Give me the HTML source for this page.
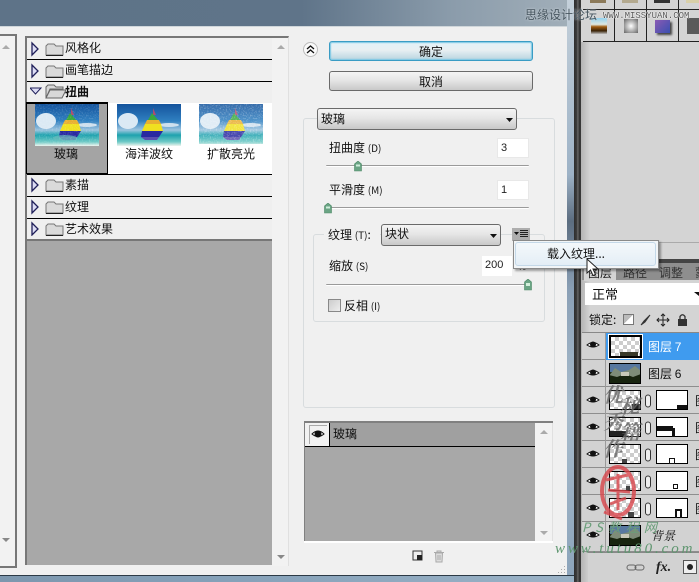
<!DOCTYPE html>
<html><head><meta charset="utf-8">
<style>
*{box-sizing:border-box}
html,body{margin:0;padding:0;width:699px;height:582px;overflow:hidden;background:#d4d4d4}
body{position:relative;font:12px/14px "WenQuanYi Zen Hei","Noto Sans CJK SC","Liberation Sans",sans-serif;color:#111}
.a{position:absolute}
.t{position:absolute;white-space:nowrap;line-height:14px}
.row{position:absolute;left:27px;width:245px;background:#efefef;border-bottom:1px solid #000}
.btn{position:absolute;border:1px solid #6a6a6a;border-radius:3px;background:linear-gradient(#f4f4f4,#e6e6e6 45%,#c8c8c8);text-align:center}
.inp{position:absolute;background:#fff;border:1px solid #e8e8e8;padding:2px 0 0 3px;font-family:"Liberation Sans",sans-serif;font-size:11px;color:#222}
.sl{position:absolute;height:2px;background:#9a9a9a;border-bottom:1px solid #fff;border-radius:1px}
.gb{position:absolute;border:1px solid #d8dcde;border-radius:3px}
.lr{position:absolute;left:582px;width:117px;height:27px;border-bottom:1px solid #8e8e8e;background:#d2d2d2}
.ck{position:absolute;width:32px;height:20px;border:1px solid #000;background-color:#fff;background-image:linear-gradient(45deg,#ccc 25%,transparent 25%,transparent 75%,#ccc 75%),linear-gradient(45deg,#ccc 25%,transparent 25%,transparent 75%,#ccc 75%);background-size:8px 8px;background-position:0 0,4px 4px}
.mk{position:absolute;left:656px;width:32px;height:20px;border:1px solid #000;background:#fff}
</style></head><body>

<!-- title bar -->
<div class="a" style="left:0;top:0;width:580px;height:26px;background:linear-gradient(90deg,#5e7388 0,#5f7489 52%,#8b9cab 78%,#a3b0ba 100%)"></div>
<div class="a" style="left:0;top:26px;width:568px;height:1px;background:#cfd6da"></div>
<!-- dialog -->
<div class="a" style="left:0;top:27px;width:568px;height:548px;background:#f0f0f0"></div>
<div class="a" style="left:567px;top:0;width:7px;height:582px;background:linear-gradient(#c4d0da,#9db2c6 30%,#5c6d80 38%,#8ba0b6 50%,#a8bccc 70%,#8ba3ba)"></div>
<div class="a" style="left:0;top:575px;width:574px;height:1px;background:#2c3a46"></div>
<div class="a" style="left:0;top:576px;width:574px;height:6px;background:linear-gradient(90deg,#7d97ae,#84a0b8 35%,#9ab2c6)"></div>
<div class="a" style="left:574px;top:0;width:7px;height:582px;background:linear-gradient(90deg,#2e2e2e,#3d3d3d 40%,#6a6a6a 55%,#333 75%,#3a3a3a)"></div>

<!-- left scroll -->
<div class="a" style="left:0;top:34px;width:17px;height:534px;background:#f2f2f2;border-right:2px solid #777;border-top:2px solid #777;border-bottom:2px solid #777"></div>
<svg class="a" style="left:1px;top:44px" width="10" height="6"><path d="M1 5L5 1L9 5Z" fill="#aaa"/></svg>
<svg class="a" style="left:1px;top:537px" width="10" height="6"><path d="M1 1L5 5L9 1Z" fill="#888"/></svg>

<!-- category list -->
<div class="a" style="left:25px;top:36px;width:247px;height:529px;background:#a8a8a8;border:1px solid #777;border-width:2px 0 0 2px"></div>
<div class="a" style="left:272px;top:36px;width:17px;height:530px;background:#f2f2f2;border-top:2px solid #777;border-right:1px solid #e0e0e0"></div>
<svg class="a" style="left:276px;top:44px" width="10" height="6"><path d="M1 5L5 1L9 5Z" fill="#aaa"/></svg>
<svg class="a" style="left:276px;top:554px" width="10" height="6"><path d="M1 1L5 5L9 1Z" fill="#888"/></svg>

<div class="row" style="top:38px;height:22px"></div>
<div class="row" style="top:60px;height:22px"></div>
<div class="row" style="top:82px;height:21px;border-bottom:0"></div>
<div class="a" style="left:27px;top:103px;width:245px;height:72px;background:#fff;border-bottom:1px solid #000"></div>
<div class="a" style="left:26px;top:102px;width:82px;height:72px;background:#a4a4a4;border:1px solid #000;border-top-width:2px"></div>
<div class="row" style="top:175px;height:22px"></div>
<div class="row" style="top:197px;height:22px"></div>
<div class="row" style="top:219px;height:22px;border-bottom:2px solid #777"></div>

<svg width="0" height="0" style="position:absolute">
<defs>
<linearGradient id="sky" x1="0" y1="0" x2="0" y2="1"><stop offset="0" stop-color="#14539c"/><stop offset=".4" stop-color="#2f7fc0"/><stop offset=".62" stop-color="#9cc4de"/><stop offset=".74" stop-color="#1ea2ae"/><stop offset=".9" stop-color="#6fcac6"/><stop offset="1" stop-color="#eef4ee"/></linearGradient>
<filter id="nz" x="0" y="0" width="100%" height="100%"><feTurbulence type="fractalNoise" baseFrequency=".7" numOctaves="1" seed="3"/><feColorMatrix values="0 0 0 0 1 0 0 0 0 1 0 0 0 0 1 1.6 0 0 0 -.75"/></filter>
<g id="boat">
<rect width="64" height="42" fill="url(#sky)"/>
<ellipse cx="11" cy="17" rx="10" ry="8" fill="#dbe9f4"/>
<ellipse cx="52" cy="21" rx="10" ry="2" fill="#cfe0ee"/>
<path d="M36 4V11H39Z" fill="#b04a70"/>
<path d="M35 9L31 16H41Z" fill="#3aa83c"/>
<path d="M30 16H42L44 20H28Z" fill="#e8b030"/>
<path d="M28 20H44L46 27H25Z" fill="#f0e020"/>
<path d="M25 27H46L42 33H24Z" fill="#2a2aa0"/>
<path d="M24 33H42L40 36H28Z" fill="#5a50b0"/>
</g>
</defs></svg>
<svg class="a" style="left:35px;top:104px" width="64" height="42"><use href="#boat"/><ellipse cx="30" cy="34" rx="12" ry="3" fill="#6bb" opacity=".7"/><rect width="64" height="42" filter="url(#nz)" opacity=".35"/></svg>
<svg class="a" style="left:117px;top:104px" width="64" height="42"><use href="#boat"/></svg>
<svg class="a" style="left:199px;top:104px" width="64" height="40"><use href="#boat"/><rect width="64" height="40" fill="#fff" opacity=".15"/><rect width="64" height="40" filter="url(#nz)" opacity=".6"/></svg>

<!-- folder + arrows -->
<svg class="a" style="left:30px;top:40px" width="36" height="196" fill="none">
<g id="f"><path d="M2 3L8 9L2 15Z" fill="#dcdcf4" stroke="#20205a" stroke-width="1.300"/><path d="M16 6L18 4H24L26 6H33V15H16Z" fill="#dadada" stroke="#777"/><path d="M16 15.500H33" stroke="#222"/></g>
<use href="#f" y="22"/>
<path d="M0 48H11L5.500 54Z" fill="#dcdcf4" stroke="#20205a"/>
<path d="M16 47L18 45H24L26 47H33V49H20L16 58Z M16 58H32L36 50H20Z" fill="#d8d8d8" stroke="#666"/>
<use href="#f" y="136"/><use href="#f" y="158"/><use href="#f" y="180"/>
</svg>
<div class="t" style="left:65px;top:41px">风格化</div>
<div class="t" style="left:65px;top:63px">画笔描边</div>
<div class="t" style="left:65px;top:85px;font-weight:bold">扭曲</div>
<div class="t" style="left:54px;top:147px">玻璃</div>
<div class="t" style="left:125px;top:147px">海洋波纹</div>
<div class="t" style="left:207px;top:147px">扩散亮光</div>
<div class="t" style="left:65px;top:178px">素描</div>
<div class="t" style="left:65px;top:200px">纹理</div>
<div class="t" style="left:65px;top:222px">艺术效果</div>

<!-- collapse -->
<div class="a" style="left:303px;top:42px;width:15px;height:15px;border-radius:50%;background:#fafafa;border:1px solid #bbb"></div>
<svg class="a" style="left:306px;top:45px" width="9" height="9" fill="none" stroke="#111" stroke-width="1.300"><path d="M1 4L4.500 1L8 4M1 8L4.500 5L8 8"/></svg>

<!-- buttons -->
<div class="btn" style="left:329px;top:41px;width:204px;height:20px;border-color:#3a9cc4;box-shadow:0 0 1px 1px #7cc8e4 inset;background:linear-gradient(#e2f2f8,#e8eff2 45%,#b8d4e0);line-height:19px">确定</div>
<div class="btn" style="left:329px;top:71px;width:204px;height:20px;line-height:19px">取消</div>

<!-- main group -->
<div class="gb" style="left:303px;top:118px;width:252px;height:290px"></div>
<div class="btn" style="left:317px;top:108px;width:200px;height:22px;text-align:left;padding-left:3px;line-height:19px">玻璃</div>
<svg class="a" style="left:505px;top:117px" width="9" height="6"><path d="M1 1H8L4.500 5Z" fill="#111"/></svg>

<div class="t" style="left:329px;top:141px">扭曲度 <span style="font-size:10px">(D)</span></div>
<div class="inp" style="left:497px;top:138px;width:32px;height:20px">3</div>
<div class="sl" style="left:326px;top:165px;width:203px"></div>
<svg class="a" style="left:354px;top:161px" width="8" height="11"><path d="M4 0L7.500 3V10H.5V3Z" fill="#6aa484" stroke="#4e8a68" stroke-width=".6"/><path d="M2 3.500H6V5.500H2Z" fill="#cfeedb"/></svg>

<div class="t" style="left:329px;top:183px">平滑度 <span style="font-size:10px">(M)</span></div>
<div class="inp" style="left:497px;top:180px;width:32px;height:20px">1</div>
<div class="sl" style="left:326px;top:207px;width:203px"></div>
<svg class="a" style="left:324px;top:203px" width="8" height="11"><path d="M4 0L7.500 3V10H.5V3Z" fill="#6aa484" stroke="#4e8a68" stroke-width=".6"/><path d="M2 3.500H6V5.500H2Z" fill="#cfeedb"/></svg>

<!-- texture group -->
<div class="gb" style="left:313px;top:234px;width:232px;height:88px"></div>
<div class="a" style="left:324px;top:226px;width:56px;height:18px;background:#f0f0f0"></div>
<div class="t" style="left:328px;top:228px">纹理 <span style="font-size:10px">(T)</span>:</div>
<div class="btn" style="left:381px;top:224px;width:120px;height:22px;text-align:left;padding-left:3px;line-height:18px">块状</div>
<svg class="a" style="left:489px;top:233px" width="9" height="6"><path d="M1 1H8L4.500 5Z" fill="#111"/></svg>
<div class="a" style="left:512px;top:228px;width:18px;height:13px;background:#aeaeae"></div>
<svg class="a" style="left:513px;top:230px" width="16" height="9"><path d="M1 2H6L3.500 5Z" fill="#111"/><path d="M7 .5H15M7 2.500H15M7 4.500H15M7 6.500H15" stroke="#222"/></svg>

<div class="t" style="left:329px;top:259px">缩放 <span style="font-size:10px">(S)</span></div>
<div class="inp" style="left:482px;top:256px;width:30px;height:20px;border:0">200</div>
<div class="t" style="left:518px;top:262px;font:9px/10px 'Liberation Sans',sans-serif;color:#333">%</div>
<div class="sl" style="left:326px;top:284px;width:203px"></div>
<svg class="a" style="left:524px;top:279px" width="8" height="12"><path d="M4 0L7.500 3V11H.5V3Z" fill="#6aa484" stroke="#4e8a68" stroke-width=".6"/><path d="M2 4H6V7H2Z" fill="#d4f0dc"/></svg>
<div class="a" style="left:328px;top:299px;width:13px;height:13px;border:1px solid #888;background:linear-gradient(135deg,#ccc,#eee)"></div>
<div class="t" style="left:344px;top:299px">反相 <span style="font-size:10px">(I)</span></div>

<!-- effect list -->
<div class="a" style="left:304px;top:421px;width:249px;height:121px;background:#a8a8a8;border:1px solid #808080;border-width:2px 0 1px 1px"></div>
<div class="a" style="left:305px;top:423px;width:230px;height:24px;background:#a0a0a0;border-bottom:1px solid #000"></div>
<div class="a" style="left:305px;top:423px;width:25px;height:23px;background:#f2f2f2;border-right:1px solid #000"></div>
<div class="a" style="left:309px;top:425px;width:18px;height:19px;border:1px solid #aaa;border-width:1px 0 0 1px"></div>
<svg class="a" style="left:311px;top:428px" width="14" height="12"><path d="M1 6Q7 0 13 6Q7 11 1 6Z" fill="#fff" stroke="#111"/><circle cx="7" cy="6" r="3.500" fill="#111"/></svg>
<div class="t" style="left:333px;top:427px">玻璃</div>
<div class="a" style="left:535px;top:423px;width:18px;height:120px;background:#f2f2f2;border-right:1px solid #e0e0e0"></div>
<svg class="a" style="left:539px;top:429px" width="10" height="6"><path d="M1 5L5 1L9 5Z" fill="#aaa"/></svg>
<svg class="a" style="left:539px;top:530px" width="10" height="6"><path d="M1 1L5 5L9 1Z" fill="#aaa"/></svg>
<div class="a" style="left:304px;top:541px;width:249px;height:2px;background:#fff"></div>
<svg class="a" style="left:412px;top:550px" width="12" height="12"><rect x="1" y="1" width="9" height="9" fill="#eee" stroke="#333"/><rect x="5" y="5" width="5" height="5" fill="#222"/></svg>
<svg class="a" style="left:433px;top:550px" width="12" height="13" fill="#ddd" stroke="#aaa"><path d="M1 2.500H11M4 2V1H8V2M2.500 3L3 12H9L9.500 3Z"/><path d="M5 5V10M7 5V10"/></svg>
<svg class="a" style="left:557px;top:566px" width="10" height="8" fill="#aaa"><rect x="7" y="0" width="1" height="1"/><rect x="4" y="3" width="1" height="1"/><rect x="7" y="3" width="1" height="1"/><rect x="1" y="6" width="1" height="1"/><rect x="4" y="6" width="1" height="1"/><rect x="7" y="6" width="1" height="1"/></svg>

<!-- right panel -->
<div class="a" style="left:581px;top:0;width:118px;height:582px;background:#d4d4d4"></div>
<div class="a" style="left:581px;top:42px;width:9px;height:540px;background:linear-gradient(90deg,#b4b4b4,#d4d4d4)"></div>
<div class="a" style="left:583px;top:9px;width:116px;height:1px;background:#222"></div>
<div class="a" style="left:583px;top:41px;width:116px;height:1px;background:#222"></div>
<div class="a" style="left:614px;top:0;width:1px;height:41px;background:#222"></div>
<div class="a" style="left:646px;top:0;width:1px;height:41px;background:#222"></div>
<div class="a" style="left:678px;top:0;width:1px;height:41px;background:#222"></div>
<div class="a" style="left:590px;top:0;width:16px;height:3px;background:#8c7a5a"></div>
<div class="a" style="left:622px;top:0;width:16px;height:3px;background:#b4aa90"></div>
<div class="a" style="left:654px;top:0;width:16px;height:3px;background:#333"></div>
<div class="a" style="left:686px;top:0;width:13px;height:3px;background:#d8cfa8"></div>
<div class="a" style="left:591px;top:18px;width:16px;height:16px;background:linear-gradient(#8fd0ee,#dfe8e0 40%,#a05c10 55%,#3a2408 80%,#bbb)"></div>
<div class="a" style="left:624px;top:19px;width:14px;height:14px;background:radial-gradient(#fff,#666)"></div>
<div class="a" style="left:655px;top:20px;width:15px;height:13px;background:linear-gradient(135deg,#8a5ab4,#3a50b0);box-shadow:2px 2px 2px #444"></div>
<div class="a" style="left:687px;top:18px;width:12px;height:16px;background:#5a5a5a"></div>

<div class="a" style="left:581px;top:242px;width:118px;height:1px;background:#aaa"></div>
<div class="a" style="left:581px;top:259px;width:118px;height:4px;background:#444"></div>
<div class="a" style="left:582px;top:263px;width:117px;height:17px;background:#8e8e8e"></div>
<div class="a" style="left:584px;top:263px;width:32px;height:18px;background:#d4d4d4"></div>
<div class="t" style="left:588px;top:266px;color:#222">图层</div>
<div class="t" style="left:623px;top:266px;color:#333">路径</div>
<div class="t" style="left:659px;top:266px;color:#333">调整</div>
<div class="t" style="left:695px;top:266px;color:#333">蒙</div>
<div class="a" style="left:585px;top:283px;width:114px;height:22px;background:#fff"></div>
<div class="t" style="left:592px;top:287px;font-size:13px">正常</div>
<svg class="a" style="left:694px;top:292px" width="5" height="5"><path d="M0 0H5V4Z" fill="#111"/></svg>
<div class="t" style="left:589px;top:313px">锁定:</div>
<div class="a" style="left:623px;top:314px;width:11px;height:11px;border:1px solid #777;background:linear-gradient(135deg,#bbb 50%,#fff 50%)"></div>
<svg class="a" style="left:640px;top:313px" width="56" height="14"><path d="M1 12L4 8L10 2L5 9Z" fill="#333" stroke="#333"/><path d="M23 1V13M17 7H29M21 3L23 1L25 3M21 11L23 13L25 11M19 5L17 7L19 9M27 5L29 7L27 9" stroke="#222" fill="none"/><rect x="38" y="6" width="9" height="7" fill="#333"/><path d="M40 6V3.500Q42.500 0 45 3.500V6" stroke="#333" fill="none" stroke-width="1.300"/></svg>
<div class="a" style="left:582px;top:332px;width:117px;height:1px;background:#888"></div>

<!-- layers -->
<div class="lr" style="top:333px"></div>
<div class="a" style="left:606px;top:333px;width:93px;height:27px;background:#3f9bef"></div>
<div class="lr" style="top:360px"></div><div class="lr" style="top:387px"></div><div class="lr" style="top:414px"></div><div class="lr" style="top:441px"></div><div class="lr" style="top:468px"></div><div class="lr" style="top:495px"></div><div class="lr" style="top:522px;height:30px"></div>
<div class="a" style="left:605px;top:333px;width:1px;height:219px;background:#9a9a9a"></div>
<svg width="0" height="0" style="position:absolute"><defs><g id="eye"><path d="M1 5Q7 0 13 5Q7 9 1 5Z" fill="#fff" stroke="#111"/><circle cx="7" cy="4.500" r="3" fill="#111"/></g>
<g id="photo"><rect width="32" height="21" fill="#24341c"/><rect width="32" height="9" fill="#5878a0"/><path d="M0 13L6 5L12 9L20 7L26 3L32 8V14H0Z" fill="#7e8c78"/><path d="M0 21V12L8 14L16 11L24 14L32 11V21Z" fill="#18240f"/><rect x="12" y="9" width="8" height="4" fill="#c8c8b8"/><rect x=".5" y=".5" width="31" height="20" fill="none" stroke="#000"/></g></defs></svg>
<svg class="a" style="left:586px;top:340px" width="16" height="200"><use href="#eye"/><use href="#eye" y="28"/><use href="#eye" y="55"/><use href="#eye" y="82"/><use href="#eye" y="109"/><use href="#eye" y="136"/><use href="#eye" y="163"/><use href="#eye" y="190"/></svg>

<div class="ck" style="left:609px;top:335px;width:33px;height:23px;border:2px solid #000;outline:1px solid #fff"></div>
<div class="a" style="left:620px;top:352px;width:18px;height:4px;background:#3a3a2a"></div>
<div class="t" style="left:648px;top:340px;color:#fff">图层 <span style="font-family:'Liberation Sans',sans-serif">7</span></div>
<svg class="a" style="left:609px;top:363px" width="32" height="21"><use href="#photo"/></svg>
<div class="t" style="left:648px;top:367px;color:#111">图层 <span style="font-family:'Liberation Sans',sans-serif">6</span></div>

<div class="ck" style="top:390px;left:609px"></div><div class="a" style="left:632px;top:404px;width:9px;height:5px;background:#222"></div>
<div class="ck" style="top:417px;left:609px"></div><div class="a" style="left:610px;top:431px;width:16px;height:5px;background:#222"></div>
<div class="ck" style="top:444px;left:609px"></div><div class="a" style="left:622px;top:459px;width:5px;height:4px;background:#444"></div>
<div class="ck" style="top:471px;left:609px"></div><div class="a" style="left:626px;top:486px;width:4px;height:4px;background:#444"></div>
<div class="ck" style="top:498px;left:609px"></div><div class="a" style="left:628px;top:512px;width:6px;height:5px;background:#444"></div>

<svg class="a" style="left:644px;top:392px" width="9" height="130" fill="#eee" stroke="#333"><rect x="1.500" y="3" width="5" height="12" rx="2.500"/><rect x="1.500" y="30" width="5" height="12" rx="2.500"/><rect x="1.500" y="57" width="5" height="12" rx="2.500"/><rect x="1.500" y="84" width="5" height="12" rx="2.500"/><rect x="1.500" y="111" width="5" height="12" rx="2.500"/></svg>

<div class="mk" style="top:390px"><div class="a" style="right:0;bottom:0;width:10px;height:4px;background:#111"></div></div>
<div class="mk" style="top:417px"><div class="a" style="left:0;top:8px;width:16px;height:5px;background:#111"></div><div class="a" style="left:15px;top:10px;width:3px;height:9px;background:#111"></div></div>
<div class="mk" style="top:444px"><div class="a" style="left:12px;top:13px;width:6px;height:6px;border:1px solid #111"></div></div>
<div class="mk" style="top:471px"><div class="a" style="left:16px;top:12px;width:5px;height:5px;border:1px solid #111"></div></div>
<div class="mk" style="top:498px"><div class="a" style="left:18px;top:10px;width:7px;height:9px;border:2px solid #111;border-bottom:0"></div></div>
<div class="t" style="left:695px;top:394px">图</div><div class="t" style="left:695px;top:421px">图</div><div class="t" style="left:695px;top:448px">图</div><div class="t" style="left:695px;top:475px">图</div><div class="t" style="left:695px;top:502px">图</div>

<svg class="a" style="left:609px;top:525px" width="32" height="21"><use href="#photo"/></svg>
<div class="t" style="left:651px;top:529px;font-style:italic;font-family:'Noto Serif CJK SC',serif">背景</div>
<div class="a" style="left:588px;top:552px;width:111px;height:30px;background:#d2d2d2;border-top:1px solid #888"></div>
<svg class="a" style="left:626px;top:563px" width="20" height="9" fill="none" stroke="#666"><rect x="1" y="2" width="9" height="5" rx="2.500"/><rect x="9" y="2" width="9" height="5" rx="2.500"/></svg>
<div class="t" style="left:656px;top:560px;font:italic bold 14px/16px 'Liberation Serif',serif;color:#222">fx.</div>
<div class="a" style="left:683px;top:560px;width:14px;height:14px;background:#eee;border:1px solid #555"></div>
<div class="a" style="left:687px;top:564px;width:6px;height:6px;background:#222;border-radius:50%"></div>

<!-- watermarks -->
<div class="t" style="left:603px;top:380px;width:22px;font-size:20px;line-height:27px;font-weight:bold;color:#6e6e6e;white-space:normal;opacity:.85;font-family:'Noto Serif CJK SC',serif;font-style:italic">优<br>秀<br>作</div>
<div class="t" style="left:620px;top:392px;width:22px;font-size:20px;line-height:26px;font-weight:bold;color:#666;white-space:normal;opacity:.85;font-family:'Noto Serif CJK SC',serif;font-style:italic">秘<br>籍</div>
<svg class="a" style="left:596px;top:462px" width="44" height="60" fill="none" stroke="#d8484e" stroke-width="4" opacity=".82"><ellipse cx="22" cy="29" rx="16" ry="24"/><path d="M10 18L32 13M12 28L34 30M14 42L30 36M22 12V48M8 50L26 57" stroke-width="3"/></svg>
<div class="t" style="left:582px;top:520px;color:#6a9e7a;font-size:13px;letter-spacing:5px;font-style:italic">PS教程网</div>
<div class="t" style="left:555px;top:541px;color:#5f9670;font:italic 15px/16px 'Liberation Serif',serif;letter-spacing:2.900px">www.tutu80.com</div>
<div class="t" style="left:525px;top:8px;color:#46555f;font-size:12px;text-shadow:0 0 2px #d8dee2">思缘设计论坛</div>
<div class="t" style="left:603px;top:11px;font:9px/11px 'Liberation Mono',monospace;color:#555;text-shadow:0 0 1px #fff,0 0 1px #fff,0 0 1px #fff">WWW.MISSYUAN.COM</div>

<!-- menu -->
<div class="a" style="left:513px;top:240px;width:146px;height:29px;background:#f2f5f7;border:1px solid #8a8a8a;box-shadow:2px 2px 2px rgba(0,0,0,.35)"></div>
<div class="a" style="left:515px;top:242px;width:141px;height:24px;border:1px solid #c4d8e8;border-radius:3px;background:linear-gradient(#f4f8fb,#e4eef6)"></div>
<div class="t" style="left:547px;top:247px">载入纹理...</div>
<svg class="a" style="left:586px;top:258px" width="14" height="19"><path d="M1 1V15L4.500 12L7 17.500L9.500 16.500L7 11H12Z" fill="#fff" stroke="#222"/></svg>
</body></html>
